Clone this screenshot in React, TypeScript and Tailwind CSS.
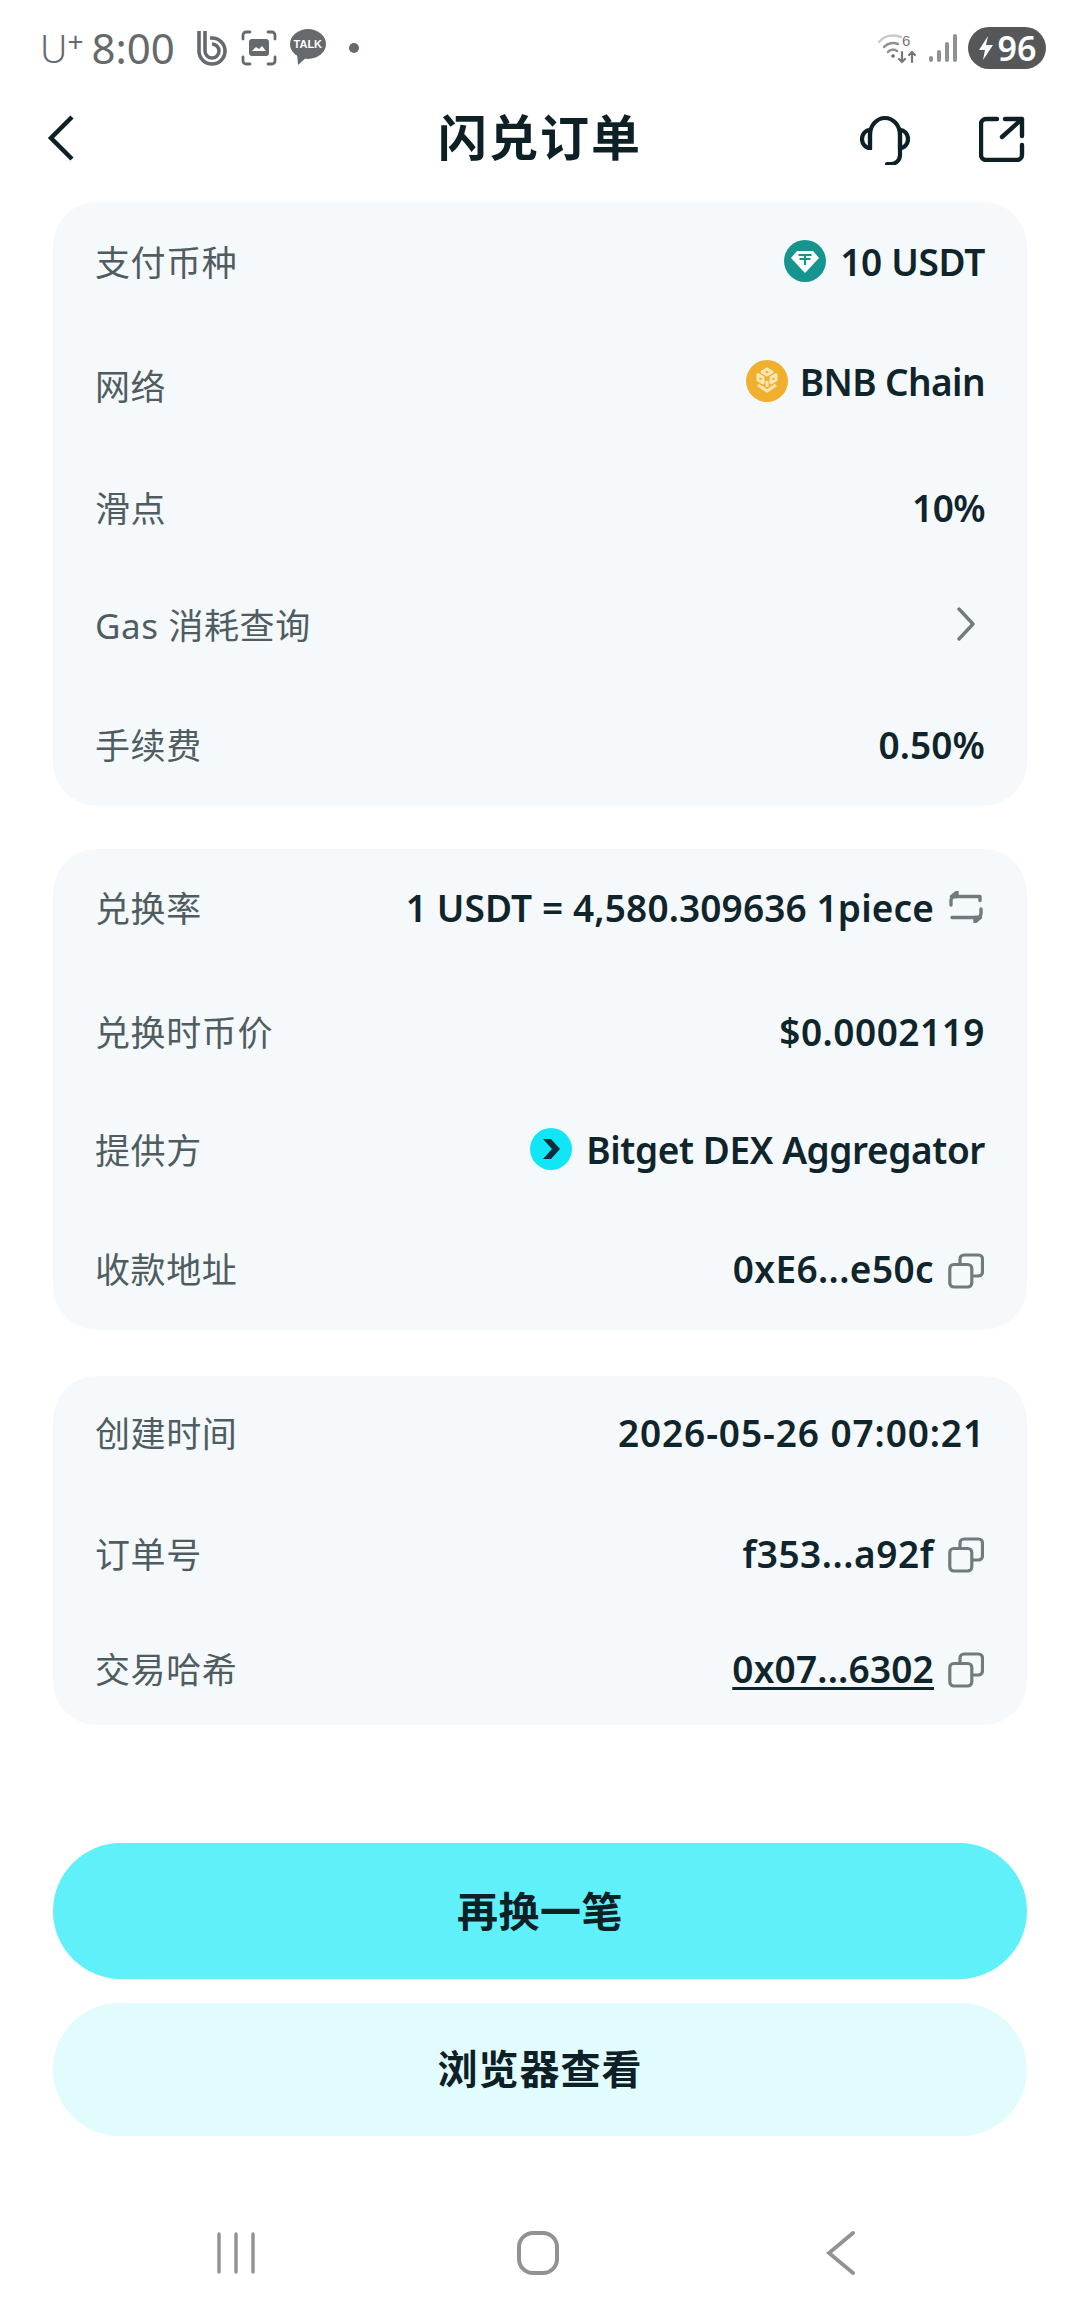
const font = { fontFamily: '"Noto Sans","Noto Sans CJK SC",sans-serif' };

function Copy() {
  return (
    <svg width="36" height="36" viewBox="0 0 36 36" fill="none" stroke="#707b7e" strokeWidth="3.2" strokeLinejoin="round" className="ml-[14px] mr-[1px] mt-[4px] shrink-0">
      <rect x="1.8" y="11.5" width="22" height="22.5" rx="4" />
      <path d="M12 11V6a4 4 0 0 1 4-4h14.5a4 4 0 0 1 4 4v13a4 4 0 0 1-4 4H24" />
    </svg>
  );
}

function Swap() {
  return (
    <svg width="36" height="32" viewBox="0 0 36 32" fill="none" stroke="#707b7e" strokeWidth="3.4" strokeLinecap="round" strokeLinejoin="round" className="ml-[14px] mr-[1px] shrink-0">
      <path d="M3 14V9.500a4 4 0 0 1 4-4h25v4" />
      <path d="M33 18v4.500a4 4 0 0 1-4 4H4" />
      <path d="M9 1 3.500 5.500 9 5.500Z" fill="#707b7e" />
      <path d="M27 31l5.500-4.500H27Z" fill="#707b7e" />
    </svg>
  );
}

function Tether() {
  return (
    <svg width="42" height="42" viewBox="0 0 42 42" className="mr-[14px] shrink-0">
      <circle cx="21" cy="21" r="21" fill="#15958e" />
      <path d="M13 11h16l6 7-14 15L7 18Z" fill="#fff" />
      <path d="M14.500 15h13M21 15v10M15.500 19h11" stroke="#15958e" strokeWidth="2.200" fill="none" />
    </svg>
  );
}

function Bnb() {
  return (
    <svg width="42" height="42" viewBox="0 0 42 42" className="mr-[12px] shrink-0">
      <circle cx="21" cy="21" r="21" fill="#f0b02d" />
      <g fill="none" stroke="#fbe6b4" strokeWidth="3" strokeLinejoin="round">
        <path d="M21 9l5 3-5 3-5-3Z" />
        <path d="M12 14.500l5 3v5.500l-5-3ZM30 14.500l-5 3v5.500l5-3Z" />
        <path d="M21 21v6M12 25l9 6 9-6" />
      </g>
    </svg>
  );
}

function BitgetLogo() {
  return (
    <svg width="42" height="42" viewBox="0 0 42 42" className="mr-[14px] shrink-0">
      <circle cx="21" cy="21" r="21" fill="#10e6f5" />
      <path d="M13 11h8l9 10-9 10h-8l9-10Z" fill="#0d2c3c" />
    </svg>
  );
}

function Row({ h, label, children }: { h: string; label: string; children: React.ReactNode }) {
  return (
    <div className={`flex items-center justify-between ${h}`}>
      <span className="text-[35px] leading-none text-[#4f5d61] tracking-[0.6px]">{label}</span>
      <div className="flex items-center pb-[2px] text-[37px] leading-none font-semibold text-[#10252b]">{children}</div>
    </div>
  );
}

function Card({ children, className }: { children: React.ReactNode; className: string }) {
  return <div className={`mx-[53px] rounded-[44px] bg-[#f5f9fc] pl-[42px] pr-[42px] ${className}`}>{children}</div>;
}

export default function App() {
  return (
    <div className="relative flex h-[2316px] w-[1080px] flex-col overflow-hidden bg-white" style={font}>
      {/* status bar */}
      <div className="flex h-[96px] items-center justify-between pl-[40px] pr-[34px] text-[#666a6c]">
        <div className="flex items-center">
          <span className="text-[38px] leading-none font-light">U</span>
          <span className="mb-[14px] text-[28px] leading-none">+</span>
          <span className="ml-[8px] text-[42px] leading-none">8:00</span>
          <svg width="30" height="36" viewBox="0 0 30 36" fill="none" stroke="#666a6c" strokeWidth="3.600" className="ml-[22px]">
            <path d="M2 1v20a13 13 0 1 0 13-13h-2" />
            <path d="M8 1v20a7 7 0 1 0 7-7" />
          </svg>
          <svg width="36" height="36" viewBox="0 0 36 36" fill="none" stroke="#666a6c" strokeWidth="2.800" strokeLinecap="round" className="ml-[14px]">
            <path d="M2 9V5a3 3 0 0 1 3-3h4M27 2h4a3 3 0 0 1 3 3v4M34 27v4a3 3 0 0 1-3 3h-4M9 34H5a3 3 0 0 1-3-3v-4" />
            <rect x="8" y="9" width="20" height="17" rx="3" fill="#666a6c" stroke="none" />
            <path d="M11 21l4-4 3 2 3-3 4 5Z" fill="#fff" stroke="none" />
          </svg>
          <div className="relative ml-[12px] h-[38px] w-[38px]">
            <svg width="38" height="38" viewBox="0 0 38 38" className="absolute inset-0">
              <ellipse cx="19" cy="15" rx="18" ry="15" fill="#666a6c" />
              <path d="M8 24l1 12 10-9Z" fill="#666a6c" />
            </svg>
            <span className="absolute left-0 top-[9px] w-[38px] text-center text-[11px] leading-[12px] font-bold text-white" style={{ fontFamily: '"Liberation Sans",sans-serif' }}>TALK</span>
          </div>
          <span className="ml-[22px] h-[10px] w-[10px] rounded-full bg-[#666a6c]" />
        </div>
        <div className="flex items-center">
          <svg width="40" height="32" viewBox="0 0 40 32" fill="none" strokeLinecap="round" className="mr-[10px]">
            <path d="M1 10a19 19 0 0 1 22-5" stroke="#c9cbcc" strokeWidth="2.500" />
            <path d="M6 15a12 12 0 0 1 14-3" stroke="#8d9092" strokeWidth="2.500" />
            <path d="M10 20a7 7 0 0 1 9-1" stroke="#8d9092" strokeWidth="2.500" />
            <circle cx="15" cy="24" r="1.800" fill="#666a6c" />
            <path d="M24 20v10M21 27l3 3 3-3M34 30V20M31 23l3-3 3 3" stroke="#777" strokeWidth="2.200" />
            <text x="24" y="14" fontSize="15" fill="#777" fontFamily="Liberation Sans">6</text>
          </svg>
          <svg width="30" height="30" viewBox="0 0 30 30" className="mr-[10px]">
            <rect x="1" y="23" width="4" height="6" rx="2" fill="#8f9293" />
            <rect x="9" y="17" width="4" height="12" rx="2" fill="#8f9293" />
            <rect x="17" y="9" width="4" height="20" rx="2" fill="#8f9293" />
            <rect x="25" y="1" width="4" height="28" rx="2" fill="#8f9293" />
          </svg>
          <div className="flex h-[42px] w-[78px] items-center justify-center rounded-full bg-[#555759] text-white">
            <svg width="16" height="24" viewBox="0 0 16 24" className="mr-[4px]">
              <path d="M10 0 1 14h6l-2 10 10-15H8Z" fill="#fff" />
            </svg>
            <span className="text-[34px] leading-none font-semibold">96</span>
          </div>
        </div>
      </div>

      {/* header */}
      <div className="relative flex h-[106px] shrink-0 items-start justify-center">
        <svg width="30" height="48" viewBox="0 0 30 48" fill="none" stroke="#0c2026" strokeWidth="4.500" className="absolute left-[46px] top-[18px]">
          <path d="M26 3 5 24l21 21" />
        </svg>
        <span className="mt-[17px] text-[49px] leading-[49px] font-semibold text-[#0c2026] tracking-[2px]">闪兑订单</span>
        <svg width="50" height="50" viewBox="0 0 50 50" fill="none" stroke="#0c2026" strokeWidth="4.200" strokeLinecap="round" className="absolute left-[860px] top-[19px]">
          <path d="M10 33 V20a15 17 0 0 1 30 0v20a9 9 0 0 1-9 9h-4" />
          <path d="M10 15a8 9 0 0 0 0 18ZM40 15a8 9 0 0 1 0 18Z" />
        </svg>
        <svg width="46" height="46" viewBox="0 0 46 46" fill="none" stroke="#0c2026" strokeWidth="4.400" strokeLinecap="round" strokeLinejoin="round" className="absolute left-[979px] top-[20px]">
          <path d="M18 3H7a5 5 0 0 0-5 5v31a5 5 0 0 0 5 5h31a5 5 0 0 0 5-5V29" />
          <path d="M26 3h17v17M43 3 23 21" />
        </svg>
      </div>

      {/* cards */}
      <Card className="">
        <Row h="h-[120px]" label="支付币种"><Tether /><span className="tracking-[-0.3px]">10 USDT</span></Row>
        <Row h="h-[128px]" label="网络"><span className="mb-[8px] flex items-center"><Bnb /><span className="tracking-[-0.6px]">BNB Chain</span></span></Row>
        <Row h="h-[116px]" label="滑点"><span className="tracking-[-0.6px]">10%</span></Row>
        <Row h="h-[118px]" label="Gas 消耗查询">
          <svg width="20" height="34" viewBox="0 0 20 34" fill="none" stroke="#707b7e" strokeWidth="3.400" strokeLinecap="round" strokeLinejoin="round" className="mr-[9px]">
            <path d="M3 2l14 15L3 32" />
          </svg>
        </Row>
        <Row h="h-[122px]" label="手续费"><span className="tracking-[0.1px]">0.50%</span></Row>
      </Card>

      <Card className="mt-[43px]">
        <Row h="h-[118px]" label="兑换率"><span className="tracking-[0.13px]">1 USDT = 4,580.309636 1piece</span><Swap /></Row>
        <Row h="h-[130px]" label="兑换时币价"><span className="tracking-[0.5px]">$0.0002119</span></Row>
        <Row h="h-[106px]" label="提供方"><BitgetLogo /><span className="tracking-[-0.4px]">Bitget DEX Aggregator</span></Row>
        <Row h="h-[127px] pt-[6px]" label="收款地址"><span className="tracking-[0.4px]">0xE6...e50c</span><Copy /></Row>
      </Card>

      <Card className="mt-[46px]">
        <Row h="h-[114px]" label="创建时间"><span className="tracking-[0.9px]">2026-05-26 07:00:21</span></Row>
        <Row h="h-[128px]" label="订单号"><span className="tracking-[0.55px]">f353...a92f</span><Copy /></Row>
        <Row h="h-[107px] pb-[5px]" label="交易哈希"><span className="underline underline-offset-[4px] tracking-[0.2px]">0x07...6302</span><Copy /></Row>
      </Card>

      {/* buttons */}
      <button className="mx-[53px] mt-[118px] flex h-[136px] shrink-0 items-center justify-center rounded-full bg-[#5ff0f9] text-[41px] leading-none font-semibold text-[#0c2026] tracking-[0.5px]">再换一笔</button>
      <button className="mx-[53px] mt-[24px] flex h-[133px] shrink-0 items-center justify-center rounded-full bg-[#e2fbfd] pb-[2px] text-[40px] leading-none font-semibold text-[#0c2026] tracking-[1px]">浏览器查看</button>

      {/* nav bar */}
      <div className="relative mt-[54px] h-[126px]">
        <svg width="38" height="42" viewBox="0 0 38 42" stroke="#929292" strokeWidth="3.400" strokeLinecap="round" className="absolute left-[217px] top-[42px]">
          <path d="M2 2v38M19 2v38M36 2v38" />
        </svg>
        <svg width="42" height="44" viewBox="0 0 42 44" fill="none" stroke="#929292" strokeWidth="4" className="absolute left-[517px] top-[41px]">
          <rect x="2" y="2" width="38" height="40" rx="14" />
        </svg>
        <svg width="30" height="44" viewBox="0 0 30 44" fill="none" stroke="#929292" strokeWidth="3.800" strokeLinecap="round" className="absolute left-[826px] top-[41px]">
          <path d="M27 2 3 22l24 20" />
        </svg>
      </div>
    </div>
  );
}
